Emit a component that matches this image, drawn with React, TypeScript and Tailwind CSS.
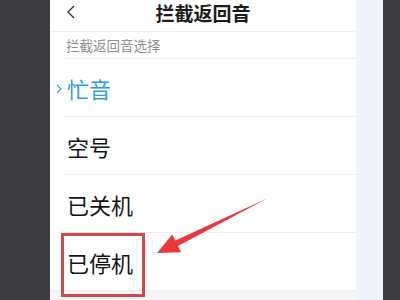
const rows = ['忙音', '空号', '已关机', '已停机'];

export default function App() {
  return (
    <div
      className="relative flex h-[300px] w-[400px] overflow-hidden bg-[#3d3c3e]"
      style={{ fontFamily: '"Noto Sans CJK SC", "Noto Sans", sans-serif' }}
    >
      <div className="ml-[50px] flex w-[306px] flex-col bg-white">
        {/* header */}
        <div className="relative h-[32px] border-b border-[#efefef]">
          <svg className="absolute left-[16px] top-[5px]" width="10" height="14" viewBox="0 0 10 14">
            <polyline points="8,1 2,7 8,13" fill="none" stroke="#333" strokeWidth="1.3" />
          </svg>
          <div className="pt-[1px] text-center text-[19px] font-bold leading-[24px] text-[#1c1c1c]">拦截返回音</div>
        </div>

        {/* section label */}
        <div className="flex h-[26px] items-center pl-[16px] text-[13.5px] text-[#8f8f8f]">拦截返回音选择</div>

        <div className="flex flex-col">
          {rows.map((r, i) => (
            <div key={r} className="relative ml-[14px] flex h-[58px] items-center border-t border-[#eeeeee]">
              {i === 0 && (
                <svg className="absolute left-[-8px] top-[25px]" width="6" height="10" viewBox="0 0 6 10">
                  <polyline points="1,1 5,5 1,9" fill="none" stroke="#3aa0d6" strokeWidth="1.1" />
                </svg>
              )}
              <span
                className={
                  'pl-[3px] text-[22px] leading-none ' + (i === 0 ? 'text-[#2e9ed8]' : 'text-[#151515]')
                }
              >
                {r}
              </span>
            </div>
          ))}
        </div>
        <div className="flex-1 border-t border-[#eeeeee] bg-[#f5f5f7]" />
      </div>

      <div className="w-[27px] bg-[#eef2fa]" />

      {/* annotation overlay */}
      <div className="absolute left-[61px] top-[233px] h-[64px] w-[84px] border-[3px] border-[#d2484b]" />
      <svg className="pointer-events-none absolute left-0 top-0" width="400" height="300" viewBox="0 0 400 300">
        <polygon
          points="157,253 172.3,234.4 175.4,240.6 268,198 178,246 181.1,252.2"
          fill="#e8383d"
        />
      </svg>
    </div>
  );
}
